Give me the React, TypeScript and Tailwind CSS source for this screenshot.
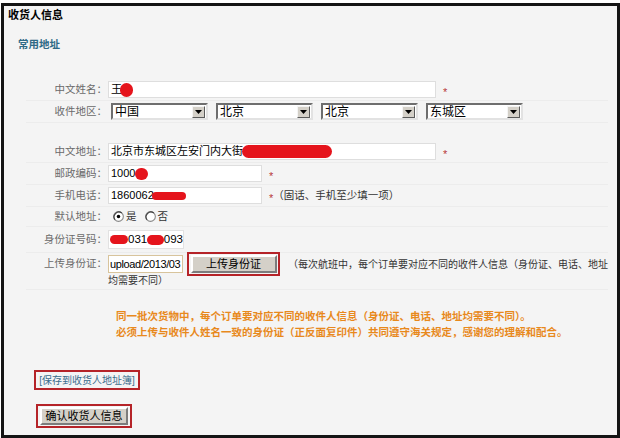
import React from "react";

const font = { fontFamily: '"Liberation Sans", "Noto Sans CJK SC", sans-serif' };

function Blot({ w, h, className = "" }: { w: string; h: string; className?: string }) {
  return <span className={`inline-block rounded-full bg-[#e5141c] ${w} ${h} ${className}`} />;
}

function Star() {
  return <span className="ml-[7px] translate-y-[3px] text-[11px] leading-none text-[#b8383a]">*</span>;
}

function Label({ children }: { children: React.ReactNode }) {
  return (
    <div className="w-[82px] shrink-0 pr-[1px] text-right text-[10.5px] text-[#6a6a6a]">{children}</div>
  );
}

function Field({ w, children }: { w: string; children?: React.ReactNode }) {
  return (
    <div
      className={`flex h-[17px] ${w} items-center overflow-hidden whitespace-nowrap border border-[#dedede] bg-white pl-[2px] text-[11px] text-black`}
    >
      {children}
    </div>
  );
}

function Select({ value }: { value: string }) {
  return (
    <div className="flex h-[17px] w-[97px] items-center border-2 border-t-[#6e6e6e] border-l-[#6e6e6e] border-r-[#e2e2e2] border-b-[#e2e2e2] bg-white">
      <span className="flex-1 pl-[2px] text-[12px] leading-none text-black">{value}</span>
      <span className="mr-[1px] flex h-[12px] w-[13px] items-center justify-center border border-t-[#f4f4f4] border-l-[#f4f4f4] border-r-[#5a5a5a] border-b-[#5a5a5a] bg-[#d4d0c8]">
        <svg width="7" height="4" viewBox="0 0 7 4">
          <path d="M0 0h7L3.5 4z" fill="#000" />
        </svg>
      </span>
    </div>
  );
}

function Radio({ checked }: { checked?: boolean }) {
  return (
    <svg width="11" height="11" viewBox="0 0 12 12" className="shrink-0">
      <circle cx="6" cy="6" r="5.3" fill="#fff" stroke="#8a8a8a" strokeWidth="1.2" />
      <path d="M2.2 9.6A5.3 5.3 0 0 1 9.6 2.2" fill="none" stroke="#404040" strokeWidth="1.2" />
      {checked && <circle cx="6" cy="6" r="1.9" fill="#000" />}
    </svg>
  );
}

function Button({ children, className = "" }: { children: React.ReactNode; className?: string }) {
  return (
    <div
      className={`flex items-center justify-center whitespace-nowrap border-2 border-t-white border-l-white border-r-[#7c7c7c] border-b-[#7c7c7c] bg-[#d4d0c8] text-[11px] text-black ${className}`}
    >
      {children}
    </div>
  );
}

const row = "flex items-center border-b border-[#ececec]";

export default function App() {
  return (
    <div className="h-[438px] w-[620px] bg-white pl-[1px] pt-[3px]" style={font}>
      <div className="h-[435px] w-[619px] border-[3px] border-[#141414] bg-[#f4f4f4]">
        <div className="ml-[4px] pt-[2px] text-[11px] font-bold leading-[14px] text-black">收货人信息</div>
        <div className="ml-[14px] mt-[15px] text-[10.5px] font-bold leading-[14px] text-[#2f6a86]">常用地址</div>

        <div className="ml-[22px] mr-[9px] mt-[28px]">
          <div className={`${row} h-[22px]`}>
            <Label>中文姓名：</Label>
            <Field w="w-[328px]">
              王<Blot w="w-[13px]" h="h-[14px]" className="-ml-[2px]" />
            </Field>
            <Star />
          </div>

          <div className={`${row} h-[22px]`}>
            <Label>收件地区：</Label>
            <div className="ml-[3px] flex gap-[8px]">
              <Select value="中国" />
              <Select value="北京" />
              <Select value="北京" />
              <Select value="东城区" />
            </div>
          </div>

          <div className={`${row} mt-[18px] h-[22px]`}>
            <Label>中文地址：</Label>
            <Field w="w-[328px]">
              北京市东城区左安门内大街
              <Blot w="w-[90px]" h="h-[13px]" className="-ml-[1px]" />
            </Field>
            <Star />
          </div>

          <div className={`${row} h-[22px]`}>
            <Label>邮政编码：</Label>
            <Field w="w-[154px]">
              1000<Blot w="w-[13px]" h="h-[12px]" />
            </Field>
            <Star />
          </div>

          <div className={`${row} h-[22px]`}>
            <Label>手机电话：</Label>
            <Field w="w-[154px]">
              1860062<Blot w="w-[34px]" h="h-[8px]" className="-ml-[2px]" />
            </Field>
            <Star />
            <span className="text-[10.5px] text-[#333]">（固话、手机至少填一项）</span>
          </div>

          <div className={`${row} h-[20px]`}>
            <Label>默认地址：</Label>
            <div className="ml-[5px] flex items-center gap-[2px] text-[10.5px] text-[#333]">
              <Radio checked />
              <span className="mr-[6px]">是</span>
              <Radio />
              <span>否</span>
            </div>
          </div>

          <div className={`${row} h-[26px]`}>
            <Label>身份证号码：</Label>
            <div className="flex h-[19px] w-[76px] items-center overflow-hidden whitespace-nowrap border border-[#e2e2e2] bg-white pl-[1px] text-[11.5px] text-black">
              <Blot w="w-[24px]" h="h-[9px]" />
              031
              <Blot w="w-[22px]" h="h-[10px]" />
              093
            </div>
          </div>

          <div className="border-b border-[#ececec] pb-[2px]">
            <div className="flex h-[22px] items-center">
              <Label>上传身份证：</Label>
              <div className="flex h-[18px] w-[75px] items-center overflow-hidden whitespace-nowrap border border-[#d8c49c] bg-white pl-[1px] text-[11px] tracking-[-0.4px] text-black">
                upload/2013/03
              </div>
              <div className="ml-[4px] flex h-[24px] w-[93px] items-center justify-center border-2 border-[#b52328]">
                <Button className="h-[18px] w-[86px]">上传身份证</Button>
              </div>
              <span className="ml-[8px] whitespace-nowrap text-[10px] text-[#333]">
                （每次航班中，每个订单要对应不同的收件人信息（身份证、电话、地址
              </span>
            </div>
            <div className="ml-[82px] h-[12px] text-[10px] leading-[12px] text-[#333]">均需要不同）</div>
          </div>
        </div>

        <div className="ml-[112px] mt-[18px] text-[10.5px] font-bold leading-[16px] text-[#e8891c]">
          <div>同一批次货物中，每个订单要对应不同的收件人信息（身份证、电话、地址均需要不同）。</div>
          <div>必须上传与收件人姓名一致的身份证（正反面复印件）共同遵守海关规定，感谢您的理解和配合。</div>
        </div>

        <div className="ml-[30px] mt-[30px] flex h-[20px] w-[106px] items-center justify-center whitespace-nowrap border-2 border-[#b52328] text-[10px] text-[#3a6d8c]">
          [保存到收货人地址簿]
        </div>

        <div className="ml-[32px] mt-[14px] flex h-[24px] w-[96px] items-center justify-center border-2 border-[#b52328]">
          <Button className="h-[18px] w-[88px]">确认收货人信息</Button>
        </div>
      </div>
    </div>
  );
}
